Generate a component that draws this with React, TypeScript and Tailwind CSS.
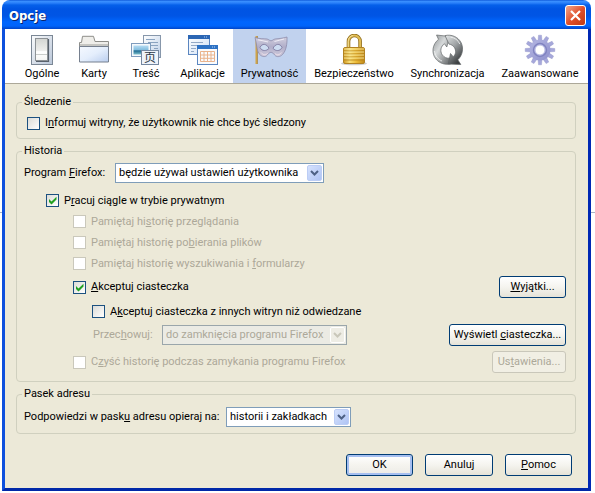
import { useState } from 'react';
import type { ReactNode } from 'react';

function GeneralIcon() {
  return (
    <svg viewBox="0 0 32 32" className="h-8 w-8" aria-hidden="true">
      <defs>
        <linearGradient id="gen-plate" x1="0" y1="0" x2="1" y2="1">
          <stop offset="0" stopColor="#fbfcfd" />
          <stop offset="1" stopColor="#b9c6d8" />
        </linearGradient>
        <linearGradient id="gen-switch" x1="0" y1="0" x2="0" y2="1">
          <stop offset="0" stopColor="#d3d5d2" />
          <stop offset="0.55" stopColor="#eeeeec" />
          <stop offset="0.6" stopColor="#ffffff" />
          <stop offset="1" stopColor="#f4f4f2" />
        </linearGradient>
      </defs>
      <rect x="5.500" y="1.500" width="21" height="29" fill="url(#gen-plate)" stroke="#7b8795" />
      <path d="M22.500 5v22.500H10" fill="none" stroke="#59626d" strokeWidth="1.200" />
      <rect x="9.500" y="4.500" width="12" height="22" fill="url(#gen-switch)" stroke="#8d9296" />
      <path d="M10 20.500h11" stroke="#c9ccca" />
    </svg>
  );
}

function TabsIcon() {
  return (
    <svg viewBox="0 0 32 32" className="h-8 w-8" aria-hidden="true">
      <defs>
        <linearGradient id="tab-body" x1="0" y1="0" x2="1" y2="1">
          <stop offset="0" stopColor="#f5f9ff" />
          <stop offset="0.5" stopColor="#e4eefc" />
          <stop offset="1" stopColor="#b9cdee" />
        </linearGradient>
      </defs>
      <path d="M1.500 14V8.500h2l1-6.200h11l1.500 5.200h13.500V14z" fill="#efeeea" stroke="#8e8e8a" />
      <path d="M1.500 12.500h29v15.500h-29z" fill="url(#tab-body)" stroke="#76808f" />
      <path d="M2 11h28" stroke="#b8b8b4" strokeWidth="1.500" />
    </svg>
  );
}

function ContentIcon() {
  return (
    <svg viewBox="0 0 32 32" className="h-8 w-8" aria-hidden="true">
      <defs>
        <linearGradient id="con-sea" x1="0" y1="0" x2="0" y2="1">
          <stop offset="0" stopColor="#b5dcf4" />
          <stop offset="0.45" stopColor="#86bfdf" />
          <stop offset="0.6" stopColor="#1f6d94" />
          <stop offset="1" stopColor="#7fc0cc" />
        </linearGradient>
        <linearGradient id="con-page" x1="0" y1="0" x2="1" y2="1">
          <stop offset="0" stopColor="#ffffff" />
          <stop offset="1" stopColor="#bdd0e8" />
        </linearGradient>
      </defs>
      <rect x="13.500" y="1.500" width="17" height="22" fill="url(#con-page)" stroke="#8797ab" />
      <path d="M16 5.500h9M18 8.500h10M18 11.500h10M24 14.500h4" stroke="#8aa3c0" />
      <rect x="1.500" y="9.500" width="19" height="13" fill="#f5f9fc" stroke="#7f9cbd" />
      <rect x="3.500" y="11.500" width="15" height="9" fill="url(#con-sea)" />
      <rect x="11.500" y="16.500" width="17" height="14" fill="#eef3fa" stroke="#7487a0" />
      <text x="20" y="28" textAnchor="middle" fontSize="12" fontWeight="400" fill="#2c3846" fontFamily="'Noto Sans CJK SC', sans-serif">
        页
      </text>
    </svg>
  );
}

function ApplicationsIcon() {
  return (
    <svg viewBox="0 0 32 32" className="h-8 w-8" aria-hidden="true">
      <defs>
        <linearGradient id="app-win" x1="0" y1="0" x2="1" y2="1">
          <stop offset="0" stopColor="#ffffff" />
          <stop offset="1" stopColor="#cfe0f5" />
        </linearGradient>
      </defs>
      <rect x="1.500" y="1.500" width="21" height="19" fill="url(#app-win)" stroke="#5b86c0" />
      <rect x="1" y="1" width="22" height="4" fill="#2b66b4" />
      <path d="M17 3h4" stroke="#a9caf1" strokeDasharray="1 1" />
      <path d="M4 8.500h12M4 11.500h6M4 14.500h5M4 17.500h3" stroke="#93a9c6" />
      <rect x="10.500" y="11.500" width="20" height="19" fill="#f9fbfe" stroke="#5b86c0" />
      <rect x="10" y="11" width="21" height="4" fill="#2e72c4" />
      <path d="M25 13h4" stroke="#b6d4f5" strokeDasharray="1 1" />
      <path d="M13.500 17.500h14v10h-14zM17 17.500v10M20.500 17.500v10M24 17.500v10M13.500 21h14M13.500 24.300h14" fill="none" stroke="#eab38c" />
    </svg>
  );
}

function PrivacyIcon() {
  return (
    <svg viewBox="0 0 36 32" className="h-8 w-9" aria-hidden="true">
      <defs>
        <linearGradient id="mask-face" x1="0" y1="0" x2="0" y2="1">
          <stop offset="0" stopColor="#d2d0df" />
          <stop offset="0.5" stopColor="#b1aec9" />
          <stop offset="1" stopColor="#cfcbdc" />
        </linearGradient>
      </defs>
      <path d="M4.500 2v28" stroke="#cfa347" strokeWidth="2" />
      <path d="M5.500 2v28" stroke="#94702b" strokeWidth="0.500" />
      <path
        d="M3 3.500c4 1.500 8.500 1 12 1.500 1.800.3 2.500 1.800 4 1.800s2.200-1.500 4-1.800c4-.5 8-.7 12-2 .3 7-.8 13.500-4.500 17.500-2.500 2.600-6 2.800-7.800.6-1.200-1.500-2.200-2.800-3.700-2.800s-2.500 1.300-3.700 2.800c-1.800 2.200-5.300 1.900-7.800-.8C4.300 16.600 4.800 9 3 3.500z"
        fill="url(#mask-face)"
        stroke="#8784a4"
        strokeWidth="0.700"
      />
      <path d="M6 5.800c3.500.9 6.500 1.100 10 2.200M32 5c-3 .9-6 1.500-9.500 2.500" fill="none" stroke="#f3f1f8" strokeWidth="0.900" />
      <path d="M8 13.500c2-4.500 6.500-4 9 .8-2.500 3-7 3.200-9-.8zM21 14.300c2.500-4.800 7-5.300 9-.8-2 4-6.500 3.800-9 .8z" fill="#cddcf1" stroke="#77739a" strokeWidth="0.800" />
      <path d="M9 18.500c2 2.600 5 3 6.500.8M23 19.500c2 2.200 4.500 1.500 6.300-1" fill="none" stroke="#efe0ea" strokeWidth="1" />
    </svg>
  );
}

function SecurityIcon() {
  return (
    <svg viewBox="0 0 32 32" className="h-8 w-8" aria-hidden="true">
      <defs>
        <linearGradient id="lock-body" x1="0" y1="0" x2="1" y2="0">
          <stop offset="0" stopColor="#cf981f" />
          <stop offset="0.3" stopColor="#f9e07a" />
          <stop offset="0.6" stopColor="#edbd3a" />
          <stop offset="1" stopColor="#c0881a" />
        </linearGradient>
      </defs>
      <ellipse cx="16" cy="29.500" rx="13" ry="1.800" fill="#cfcfcf" />
      <path d="M10.500 14V7.500a5.800 6 0 0 1 11.600 0V14" fill="none" stroke="#8f6c1a" strokeWidth="3.600" />
      <path d="M10.500 14V7.500a5.800 6 0 0 1 11.600 0V14" fill="none" stroke="#e1bd55" strokeWidth="2" />
      <path d="M10.200 13V7.500a6 6.200 0 0 1 5-6" fill="none" stroke="#fbedb5" strokeWidth="0.700" />
      <rect x="5.500" y="13.500" width="21" height="16" rx="1.500" fill="url(#lock-body)" stroke="#b28322" />
      <path d="M6 17h20M6 20h20M6 23h20M6 26h20" stroke="#b5831c" strokeWidth="0.800" />
      <path d="M6 15h20M6 18h20M6 21h20M6 24h20" stroke="#fdeea5" strokeWidth="0.900" opacity="0.900" />
    </svg>
  );
}

function SyncIcon() {
  return (
    <svg viewBox="0 0 32 32" className="h-8 w-8" aria-hidden="true">
      <defs>
        <linearGradient id="sync-left" x1="0" y1="0" x2="1" y2="1">
          <stop offset="0" stopColor="#8b8f91" />
          <stop offset="0.4" stopColor="#d6d9da" />
          <stop offset="1" stopColor="#5a5d5f" />
        </linearGradient>
        <linearGradient id="sync-right" x1="0" y1="0" x2="0.600" y2="1">
          <stop offset="0" stopColor="#e6e8e9" />
          <stop offset="0.5" stopColor="#9ea2a4" />
          <stop offset="1" stopColor="#3c3f41" />
        </linearGradient>
      </defs>
      {/* left arrow, head at the top */}
      <path
        d="M4.500 1l13 1.500-2.700 10.500-2.300-3.200c-3.800 2.400-4.800 7.400-2.200 11.100 1.800 2.500 4.500 3.600 7.300 3.200l1.400 5.700c-5.500 1.500-11.300-.3-15-4.700C-.9 19.300.2 10.400 6.500 5.300z"
        fill="url(#sync-left)"
        stroke="#64686a"
        strokeWidth="0.700"
      />
      {/* right arrow, head at the bottom */}
      <path
        d="M13 1.600c6.500-1.500 13 1.200 16 6.900 2.900 5.800 1.600 12.800-3.200 17.300l3 4.700-12.500-.5 2.200-10.500 2.700 3.200c2.700-2.300 3.100-6 1.300-9-1.300-2-3.200-3.300-5.500-3.600z"
        fill="url(#sync-right)"
        stroke="#5d6163"
        strokeWidth="0.700"
      />
      <path d="M2.500 17c.5 4.500 3.300 8.300 7.500 10M18.500 3.200c4 .3 7.500 2.800 9.300 6.800" fill="none" stroke="#f4f5f5" strokeWidth="1" opacity="0.800" />
    </svg>
  );
}

const teeth = [0, 30, 60, 90, 120, 150, 180, 210, 240, 270, 300, 330];

function AdvancedIcon() {
  return (
    <svg viewBox="0 0 32 32" className="h-8 w-8" aria-hidden="true">
      <defs>
        <linearGradient id="gear-body" x1="0" y1="0" x2="1" y2="1">
          <stop offset="0" stopColor="#b4b6e2" />
          <stop offset="1" stopColor="#8e90cc" />
        </linearGradient>
      </defs>
      {teeth.map((angle) => (
        <path key={angle} d="M14 7l.5-5.800h3l.5 5.800z" fill="#a6a8da" stroke="#9092c8" strokeWidth="0.400" transform={`rotate(${angle} 16 16)`} />
      ))}
      <circle cx="16" cy="16" r="10.500" fill="url(#gear-body)" />
      <circle cx="16" cy="16" r="6.500" fill="none" stroke="#8083c0" strokeWidth="1.400" />
      <circle cx="16" cy="16" r="5" fill="#ffffff" stroke="#b9bbe4" strokeWidth="1" />
    </svg>
  );
}

const panes = [
  { label: 'Ogólne', Icon: GeneralIcon, width: 'w-[52px]' },
  { label: 'Karty', Icon: TabsIcon, width: 'w-[52px]' },
  { label: 'Treść', Icon: ContentIcon, width: 'w-[52px]' },
  { label: 'Aplikacje', Icon: ApplicationsIcon, width: 'w-[61px]' },
  { label: 'Prywatność', Icon: PrivacyIcon, width: 'w-[73px]' },
  { label: 'Bezpieczeństwo', Icon: SecurityIcon, width: 'w-[96px]' },
  { label: 'Synchronizacja', Icon: SyncIcon, width: 'w-[91px]' },
  { label: 'Zaawansowane', Icon: AdvancedIcon, width: 'w-[94px]' },
];

// Access key, underlined the way XP dialogs do it
function Key({ children }: { children: ReactNode }) {
  return <span className="underline underline-offset-1">{children}</span>;
}

type CheckProps = { children: ReactNode; defaultChecked?: boolean; disabled?: boolean };

function Check({ children, defaultChecked, disabled }: CheckProps) {
  return (
    <label className={`flex items-center gap-[5px] ${disabled ? 'text-[#aca899]' : 'text-black'}`}>
      <span className="grid shrink-0 place-items-center">
        <input
          type="checkbox"
          defaultChecked={defaultChecked}
          disabled={disabled}
          className="peer col-start-1 row-start-1 h-[13px] w-[13px] appearance-none border border-[#1c5180] bg-linear-to-br from-[#dcdcd7] to-white disabled:border-[#cac8bb] disabled:from-white"
        />
        <svg viewBox="0 0 9 9" className="pointer-events-none invisible col-start-1 row-start-1 h-[9px] w-[9px] peer-checked:visible" aria-hidden="true">
          <path d="M1 3v3l2.500 2.500L8.500 3.500V.7L3.500 5.600z" fill="#21a121" />
        </svg>
      </span>
      <span className="whitespace-nowrap">{children}</span>
    </label>
  );
}

type DropdownProps = { id: string; options: string[]; width: string; disabled?: boolean };

function Dropdown({ id, options, width, disabled }: DropdownProps) {
  return (
    <div className={`grid shrink-0 items-center ${width}`}>
      <select
        id={id}
        disabled={disabled}
        className="col-start-1 row-start-1 h-5 w-full appearance-none border border-[#7f9db9] bg-white pr-5 pl-[3px] text-black opacity-100 outline-none disabled:border-[#9aa6ab] disabled:bg-[#ebebe4] disabled:text-[#aca899]"
      >
        {options.map((option) => (
          <option key={option}>{option}</option>
        ))}
      </select>
      <span
        className={`pointer-events-none col-start-1 row-start-1 mr-[2px] grid h-4 w-[15px] place-items-center justify-self-end rounded-[2px] border ${
          disabled ? 'border-white bg-[#eeede5] text-[#c9c7ba]' : 'border-[#bccdf5] bg-linear-to-br from-[#d6e2fd] to-[#afc4f4] text-[#4d6185]'
        }`}
      >
        <svg viewBox="0 0 9 6" className="h-[6px] w-[9px]" aria-hidden="true">
          <path d="M1 1l3.500 3.500L8 1" fill="none" stroke="currentColor" strokeWidth="2" />
        </svg>
      </span>
    </div>
  );
}

type ButtonProps = { children: ReactNode; width: string; disabled?: boolean; primary?: boolean };

function Button({ children, width, disabled, primary }: ButtonProps) {
  let look = 'border-[#003c74] bg-linear-to-b from-white via-[#f5f4ef] to-[#e6e3d8] text-black';
  if (disabled) {
    look = 'border-[#c9c7ba] bg-[#f1efe4] text-[#aca899]';
  } else if (primary) {
    look = 'border-[#003c74] bg-linear-to-b from-white via-[#f5f4ef] to-[#ecebe6] text-black shadow-[inset_0_0_0_2px_#a6bff0]';
  }

  return (
    <button type="button" disabled={disabled} className={`h-[22px] shrink-0 rounded-[3px] border text-center whitespace-nowrap ${width} ${look}`}>
      {children}
    </button>
  );
}

function Group({ title, children }: { title: string; children: ReactNode }) {
  return (
    <fieldset className="min-w-0 rounded-[4px] border border-[#d0d0bf] pr-[9px] pl-[7px]">
      <legend className="-ml-[2px] px-[2px]">{title}</legend>
      {children}
    </fieldset>
  );
}

export default function App() {
  const [active, setActive] = useState('Prywatność');

  return (
    <div className="relative bg-white pr-1 pl-[2px] font-[Roboto,'DejaVu_Sans_Condensed',sans-serif] text-[11px] leading-4 text-black">
      {/* Edge of the window lying behind the dialog */}
      <div className="absolute inset-x-0 top-[212px] h-px bg-[#a9b3c4]" />

      <div className="relative rounded-t-lg bg-[linear-gradient(180deg,#0048d0_0px,#3d92ff_1px,#2a80fa_3px,#0560ea_5px,#0054e3_9px,#0055e5_16px,#0066fe_22px,#0064fa_26px,#0044c8_29px,#0a4fe0_30px,#0a4fe0_100%)]">
        <div className="flex h-[29px] items-center justify-between pt-[2px] pr-[5px] pl-[7px]">
          <h1 className="font-['DejaVu_Sans_Condensed','DejaVu_Sans',sans-serif] text-[13px] font-bold text-white [text-shadow:1px_1px_#0a246a]">Opcje</h1>
          <button
            type="button"
            aria-label="Zamknij"
            className="grid h-[21px] w-[21px] place-items-center rounded-[3px] border border-white bg-linear-to-br from-[#f0a58a] via-[#e0502c] to-[#c03a10]"
          >
            <svg viewBox="0 0 13 13" className="h-[13px] w-[13px]" aria-hidden="true">
              <path d="M2 2l9 9M11 2l-9 9" stroke="#ffffff" strokeWidth="2.200" />
            </svg>
          </button>
        </div>

        <div className="border-r-[3px] border-b-[3px] border-l-[3px] border-t-0 border-r-[#0028b4] border-b-[#0028a8] border-l-[#0d50de] bg-[#ece9d8]">
          <nav className="flex border-b border-[#aca899] bg-white pl-[11px]">
            {panes.map(({ label, Icon, width }) => (
              <button
                key={label}
                type="button"
                onClick={() => setActive(label)}
                className={`flex flex-col items-center pt-[5px] pb-px whitespace-nowrap ${width} ${active === label ? 'bg-[#c1d2ee]' : 'bg-white'}`}
              >
                <Icon />
                {label}
              </button>
            ))}
          </nav>

          <form className="flex flex-col gap-1 pt-[10px] pr-3 pb-3 pl-[11px]">
            <Group title="Śledzenie">
              <div className="pt-[5px] pb-[7px] pl-[3px]">
                <Check>
                  I<Key>n</Key>formuj witryny, że użytkownik nie chce być śledzony
                </Check>
              </div>
            </Group>

            <Group title="Historia">
              <div className="flex items-center gap-[10px] pt-1 pb-[7px]">
                <label htmlFor="history" className="w-[81px] whitespace-nowrap">
                  Program <Key>F</Key>irefox:
                </label>
                <Dropdown
                  id="history"
                  width="w-[209px]"
                  options={['będzie używał ustawień użytkownika', 'będzie pamiętał historię', 'nie będzie pamiętał historii']}
                />
              </div>

              <div className="flex h-[21px] items-center pl-[22px]">
                <Check defaultChecked>
                  P<Key>r</Key>acuj ciągle w trybie prywatnym
                </Check>
              </div>

              <div className="flex flex-col pb-[7px] pl-[49px]">
                <div className="flex h-[21px] items-center">
                  <Check disabled>
                    Pamiętaj hi<Key>s</Key>torię przeglądania
                  </Check>
                </div>
                <div className="flex h-[21px] items-center">
                  <Check disabled>
                    Pamiętaj historię po<Key>b</Key>ierania plików
                  </Check>
                </div>
                <div className="flex h-[21px] items-center">
                  <Check disabled>
                    Pamiętaj historię wyszukiwania i <Key>f</Key>ormularzy
                  </Check>
                </div>
                <div className="flex h-[26px] items-center justify-between">
                  <Check defaultChecked>
                    <Key>A</Key>kceptuj ciasteczka
                  </Check>
                  <Button width="w-[67px]">
                    <Key>W</Key>yjątki...
                  </Button>
                </div>
                <div className="flex h-[23px] items-center pl-[19px]">
                  <Check>
                    A<Key>k</Key>ceptuj ciasteczka z innych witryn niż odwiedzane
                  </Check>
                </div>
                <div className="flex h-6 items-center justify-between pl-5">
                  <div className="flex items-center gap-[10px]">
                    <label htmlFor="keep" className="w-[59px] whitespace-nowrap text-[#aca899]">
                      Przec<Key>h</Key>owuj:
                    </label>
                    <Dropdown id="keep" width="w-[185px]" options={['do zamknięcia programu Firefox']} disabled />
                  </div>
                  <Button width="w-[117px]">
                    Wyświetl <Key>c</Key>iasteczka...
                  </Button>
                </div>
                <div className="mt-[3px] flex h-6 items-center justify-between">
                  <Check disabled>
                    C<Key>z</Key>yść historię podczas zamykania programu Firefox
                  </Check>
                  <Button width="w-[74px]" disabled>
                    Us<Key>t</Key>awienia...
                  </Button>
                </div>
              </div>
            </Group>

            <Group title="Pasek adresu">
              <div className="flex items-center gap-[10px] pt-[5px] pb-[6px]">
                <label htmlFor="suggest" className="w-[192px] whitespace-nowrap">
                  Podpowiedzi w pask<Key>u</Key> adresu opieraj na:
                </label>
                <Dropdown id="suggest" width="w-[125px]" options={['historii i zakładkach', 'historii', 'zakładkach', 'niczym']} />
              </div>
            </Group>

            <div className="flex justify-end gap-3 pt-4 pr-1">
              <Button width="w-[67px]" primary>
                OK
              </Button>
              <Button width="w-[68px]">Anuluj</Button>
              <Button width="w-[67px]">
                <Key>P</Key>omoc
              </Button>
            </div>
          </form>
        </div>
      </div>
    </div>
  );
}
